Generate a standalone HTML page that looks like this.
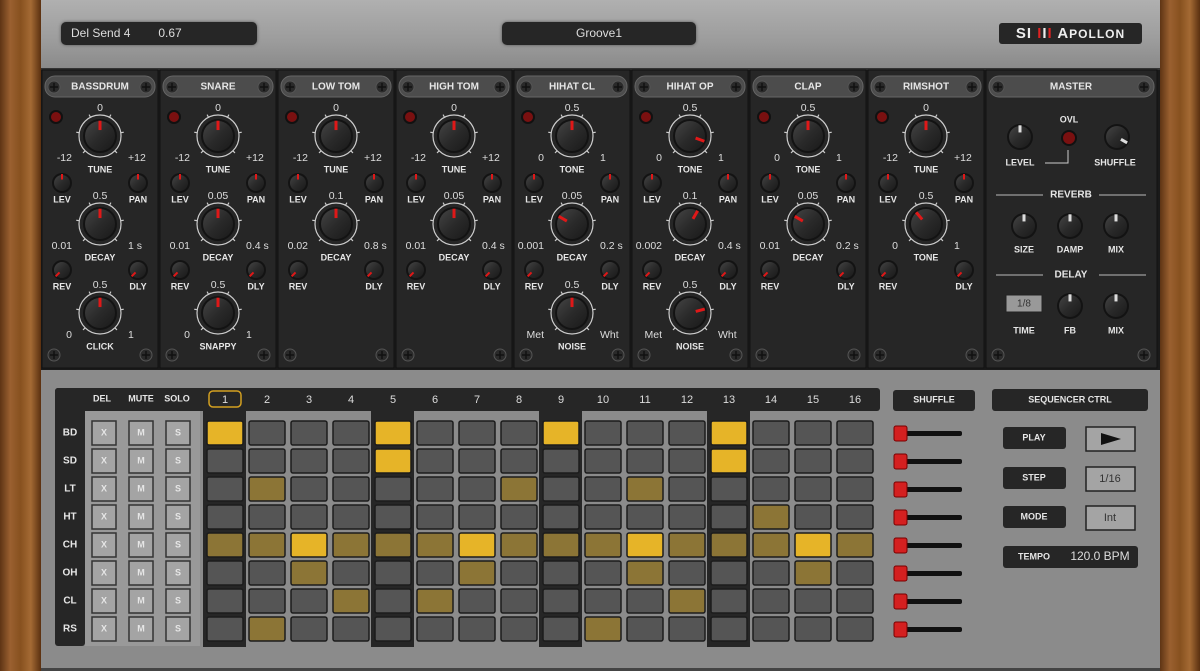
<!DOCTYPE html>
<html><head><meta charset="utf-8">
<style>
html,body{margin:0;padding:0;width:1200px;height:671px;overflow:hidden;background:#888;font-family:"Liberation Sans",sans-serif}
.abs{position:absolute}
.wood{background:linear-gradient(90deg,#5e3414,#9a6030 25%,#87511f 50%,#a46a34 75%,#5a3010);}
</style></head><body>
<div class="abs wood" style="left:0;top:0;width:41px;height:671px"></div>
<div class="abs wood" style="left:1160px;top:0;width:40px;height:671px"></div>
<div class="abs" style="left:41px;top:0;width:1119px;height:68px;background:linear-gradient(#b0b0b0,#9c9c9c 60%,#8a8a8a);border-bottom:2px solid #333"></div>
<div class="abs" style="left:61px;top:22px;width:196px;height:23px;background:#262626;border-radius:5px;box-shadow:0 0 3px #555;color:#ddd;font-size:12px;line-height:23px"><span style="margin-left:10px">Del Send 4</span><span style="margin-left:28px">0.67</span></div>
<div class="abs" style="left:502px;top:22px;width:194px;height:23px;background:#262626;border-radius:5px;box-shadow:0 0 3px #555;color:#ddd;font-size:12px;line-height:23px;text-align:center">Groove1</div>
<div class="abs" style="left:999px;top:23px;width:143px;height:21px;background:#262626;border-radius:3px;color:#eee;font-size:15px;font-weight:bold;line-height:21px;text-align:center;letter-spacing:1px">SI <span style="color:#d22">I</span>I<span style="color:#d22">I</span> A<span style="font-size:12px">POLLON</span></div>
<div class="abs" style="left:41px;top:70px;width:1119px;height:300px;background:#1a1a1a"></div>
<svg class="abs" style="left:0;top:0" width="1200" height="671" id="s"></svg>
<script>
var o='<defs><linearGradient id="kg" x1="0" y1="0" x2="1" y2="1"><stop offset="0" stop-color="#444"/><stop offset="0.5" stop-color="#2a2a2a"/><stop offset="1" stop-color="#1a1a1a"/></linearGradient></defs>';
function t(x,y,s,sz,a,c,w){o+='<text x="'+x+'" y="'+y+'" font-size="'+(sz||10)+'" text-anchor="'+(a||'middle')+'" fill="'+(c||'#ddd')+'" font-weight="'+(w||'normal')+'" font-family="Liberation Sans, sans-serif" dominant-baseline="middle">'+s+'</text>';}
function L(x,y,s,sz){t(x,y,s.toUpperCase(),sz||9,'middle','#e6e6e6','bold');}
function screw(x,y){o+='<circle cx="'+x+'" cy="'+y+'" r="6" fill="#2a2a2a" stroke="#555"/><path d="M'+(x-4)+' '+y+'H'+(x+4)+'M'+x+' '+(y-4)+'V'+(y+4)+'" stroke="#111" stroke-width="1.5"/>';}
function knob(x,y,r,ang,ring,ptrCol){
 if(ring){o+='<circle cx="'+x+'" cy="'+y+'" r="'+(r+4)+'" fill="none" stroke="#ccc" stroke-width="1.2"/>';
  for(var i=0;i<11;i++){var a=(-135+i*27)*Math.PI/180;if(i%2)continue;o+='<line x1="'+(x+Math.sin(a)*(r+4))+'" y1="'+(y-Math.cos(a)*(r+4))+'" x2="'+(x+Math.sin(a)*(r+7))+'" y2="'+(y-Math.cos(a)*(r+7))+'" stroke="#ccc" stroke-width="1.2"/>';}}
 o+='<circle cx="'+x+'" cy="'+y+'" r="'+r+'" fill="#131313"/><circle cx="'+x+'" cy="'+y+'" r="'+(r-2)+'" fill="url(#kg)"/>';
 var a=ang*Math.PI/180;o+='<line x1="'+(x+Math.sin(a)*r*0.35)+'" y1="'+(y-Math.cos(a)*r*0.35)+'" x2="'+(x+Math.sin(a)*r*0.9)+'" y2="'+(y-Math.cos(a)*r*0.9)+'" stroke="'+(ptrCol||'#e01818')+'" stroke-width="'+(r>12?3:2)+'"/>';}
var mods=[["BassDrum",["0","-12","+12","TUNE",0],["0.5","0.01","1 s","DECAY",0],["0.5","0","1","CLICK",0]],
["Snare",["0","-12","+12","TUNE",0],["0.05","0.01","0.4 s","DECAY",0],["0.5","0","1","SNAPPY",0]],
["Low Tom",["0","-12","+12","TUNE",0],["0.1","0.02","0.8 s","DECAY",0]],
["High Tom",["0","-12","+12","TUNE",0],["0.05","0.01","0.4 s","DECAY",0]],
["Hihat Cl",["0.5","0","1","TONE",0],["0.05","0.001","0.2 s","DECAY",-60],["0.5","Met","Wht","NOISE",0]],
["Hihat Op",["0.5","0","1","TONE",110],["0.1","0.002","0.4 s","DECAY",30],["0.5","Met","Wht","NOISE",75]],
["Clap",["0.5","0","1","TONE",0],["0.05","0.01","0.2 s","DECAY",-60]],
["Rimshot",["0","-12","+12","TUNE",0],["0.5","0","1","TONE",-40]]];
mods.forEach(function(m,i){var x0=42+i*118,cx=x0+58;
 o+='<rect x="'+x0+'" y="70" width="116" height="298" fill="#262626" stroke="#111"/>';
 o+='<rect x="'+(x0+3)+'" y="76" width="110" height="21" rx="10" fill="#4c4c4c" stroke="#666"/>';
 screw(x0+12,87);screw(x0+104,87);screw(x0+12,355);screw(x0+104,355);
 L(cx,87,m[0],10);
 o+='<circle cx="'+(x0+14)+'" cy="117" r="6" fill="#7a1010" stroke="#111" stroke-width="2"/>';
 var ys=[136,224,313];
 for(var k=1;k<m.length;k++){var y=ys[k-1],p=m[k];knob(cx,y,17,p[4],1);t(cx,y-28,p[0],10.5);t(cx-28,y+22,p[1],10.5,'end');t(cx+28,y+22,p[2],10.5,'start');L(cx,y+34,p[3]);}
 knob(x0+20,183,10,0,0);knob(x0+96,183,10,0,0);L(x0+20,200,"LEV");L(x0+96,200,"PAN");
 knob(x0+20,270,10,-135,0);knob(x0+96,270,10,-135,0);L(x0+20,287,"REV");L(x0+96,287,"DLY");
});
var mx=986;o+='<rect x="'+mx+'" y="70" width="171" height="298" fill="#262626" stroke="#111"/><rect x="'+(mx+3)+'" y="76" width="165" height="21" rx="10" fill="#4c4c4c" stroke="#666"/>';
screw(998,87);screw(1144,87);screw(998,355);screw(1144,355);L(1071,87,"Master",10);
knob(1020,137,13,0,0,'#ddd');knob(1117,137,13,120,0,'#ddd');o+='<circle cx="1069" cy="138" r="7" fill="#7a1010" stroke="#111" stroke-width="2"/><path d="M1045 163H1068V150" stroke="#ccc" fill="none"/>';
L(1069,120,"OVL");L(1020,163,"LEVEL");L(1115,163,"SHUFFLE");
o+='<path d="M996 195H1043M1099 195H1146M996 275H1043M1099 275H1146" stroke="#bbb"/>';L(1071,195,"Reverb",10);L(1071,275,"Delay",10);
[1024,1070,1116].forEach(function(x,j){knob(x,226,13,0,0,'#ddd');L(x,250,["SIZE","DAMP","MIX"][j]);});
[1070,1116].forEach(function(x,j){knob(x,306,13,0,0,'#ddd');L(x,331,["FB","MIX"][j]);});
o+='<rect x="1006" y="295" width="36" height="17" fill="#999" stroke="#222"/>';t(1024,304,"1/8",10,'middle','#333');L(1024,331,"TIME");
o+='<rect x="41" y="370" width="1119" height="298" fill="#8b8b8b"/>';
o+='<rect x="55" y="388" width="825" height="23" rx="3" fill="#262626"/><rect x="55" y="388" width="30" height="258" rx="3" fill="#262626"/>';
o+='<rect x="85" y="411" width="115" height="235" fill="#999"/>';
L(102,399,"DEL");L(141,399,"MUTE");L(177,399,"SOLO");
var rows=["BD","SD","LT","HT","CH","OH","CL","RS"];
var on={0:{1:2,5:2,9:2,13:2},1:{5:2,13:2},2:{2:1,8:1,11:1},3:{14:1},4:{1:1,2:1,3:2,4:1,5:1,6:1,7:2,8:1,9:1,10:1,11:2,12:1,13:1,14:1,15:2,16:1},5:{3:1,7:1,11:1,15:1},6:{4:1,6:1,12:1},7:{2:1,10:1}};
[1,5,9,13].forEach(function(c){o+='<rect x="'+(203+(c-1)*42)+'" y="411" width="43" height="236" fill="#262626"/>';});
for(var c=1;c<=16;c++){var sx=207+(c-1)*42;t(sx+18,400,c,11,'middle','#ddd');}
o+='<rect x="209" y="391" width="32" height="16" rx="4" fill="none" stroke="#d4a020" stroke-width="1.5"/>';
rows.forEach(function(r,i){var y=421+i*28;L(70,y+12,r,10);
 ["X","M","S"].forEach(function(b,j){var bx=[92,129,166][j];o+='<rect x="'+bx+'" y="'+y+'" width="24" height="24" fill="#a4a4a4" stroke="#333" stroke-width="1.5"/>';L(bx+12,y+12,b);});
 for(var c=1;c<=16;c++){var sx=207+(c-1)*42,v=on[i][c];var f=v==2?'#e6b428':v==1?'#8c7536':'#555';
  o+='<rect x="'+sx+'" y="'+y+'" width="36" height="24" rx="2" fill="'+f+'" stroke="#1c1c1c" stroke-width="1.5"/>';}
 o+='<rect x="900" y="'+(y+10)+'" width="62" height="5" rx="2" fill="#111"/><rect x="894" y="'+(y+5)+'" width="13" height="15" rx="2" fill="#d42020" stroke="#700"/>';
});
o+='<rect x="893" y="390" width="82" height="21" rx="3" fill="#262626"/>';L(934,400,"SHUFFLE");
o+='<rect x="992" y="389" width="156" height="22" rx="3" fill="#262626"/>';L(1070,400,"SEQUENCER CTRL");
[["PLAY",438],["STEP",478],["MODE",517]].forEach(function(p){o+='<rect x="1003" y="'+(p[1]-11)+'" width="63" height="22" rx="3" fill="#262626"/>';L(1034,p[1],p[0]);});
o+='<rect x="1086" y="427" width="49" height="24" fill="#a4a4a4" stroke="#222" stroke-width="1.5"/><path d="M1101 433L1121 439L1101 445Z" fill="#111"/>';
o+='<rect x="1086" y="467" width="49" height="24" fill="#a4a4a4" stroke="#222" stroke-width="1.5"/>';t(1110,479,"1/16",11,'middle','#333');
o+='<rect x="1086" y="506" width="49" height="24" fill="#a4a4a4" stroke="#222" stroke-width="1.5"/>';t(1110,518,"Int",11,'middle','#333');
o+='<rect x="1003" y="546" width="135" height="22" rx="3" fill="#262626"/>';L(1034,557,"TEMPO");t(1100,557,"120.0 BPM",12,'middle','#ddd');
o+='<rect x="41" y="668" width="1119" height="3" fill="#444"/>';
document.getElementById('s').innerHTML=o;
</script>
</body></html>
